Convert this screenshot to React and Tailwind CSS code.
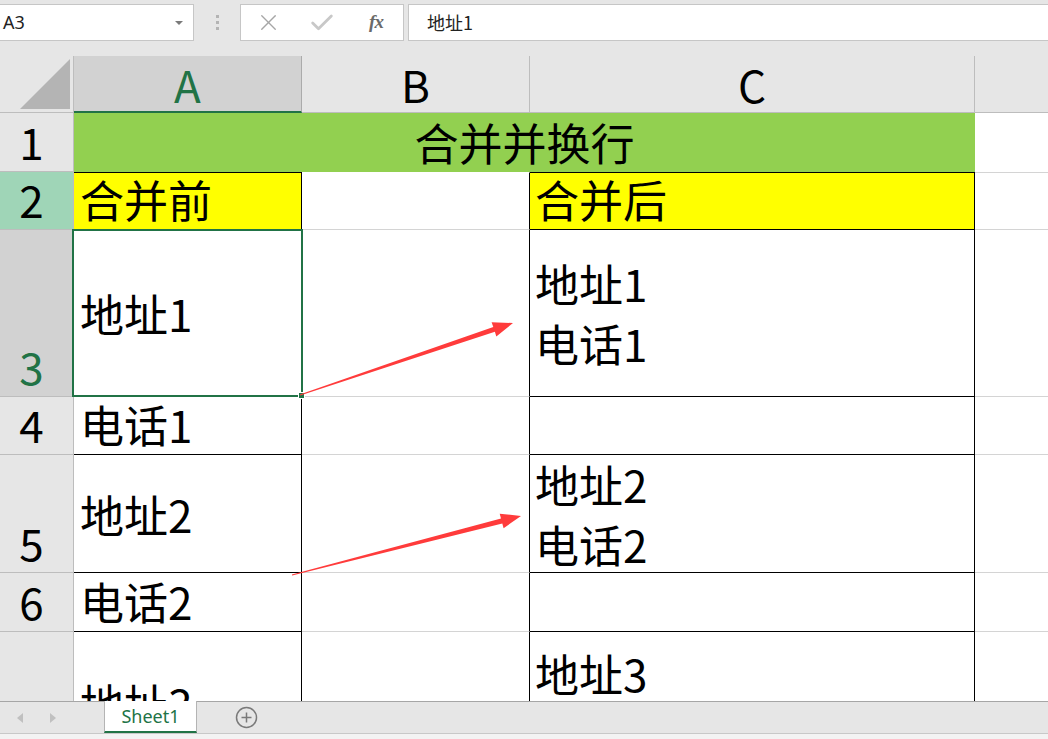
import React from 'react';
import { X, Check } from 'lucide-react';

// cell text in the sheet is large (zoomed-in workbook)
const big = 'text-[44px] leading-[60px] whitespace-nowrap';
// single line that sits on the bottom edge of a short row
const low = 'text-[44px] leading-[52px] whitespace-nowrap pb-[4px]';

function RowHeader({ label, className = '' }) {
  return (
    <div
      className={`w-[74px] shrink-0 flex items-end justify-center pr-[10px] border-r border-b border-[#bdbdbd] ${className}`}
    >
      <span className={low}>{label}</span>
    </div>
  );
}

function Row({ height, children }) {
  return <div className={`flex shrink-0 ${height}`}>{children}</div>;
}

// A column: black borders
function CellA({ className = '', children }) {
  return (
    <div
      className={`w-[228px] shrink-0 flex pl-[6px] border-r border-b border-r-black border-b-black ${className}`}
    >
      {children}
    </div>
  );
}

// B column: grid line below, C's black border to the right
function CellB({ className = '' }) {
  return (
    <div
      className={`w-[228px] shrink-0 border-r border-b border-r-black border-b-[#d4d4d4] ${className}`}
    />
  );
}

function CellC({ className = '', children }) {
  return (
    <div
      className={`w-[445px] shrink-0 flex flex-col pl-[5px] border-r border-b border-r-black border-b-black ${className}`}
    >
      {children}
    </div>
  );
}

function CellD({ className = '' }) {
  return <div className={`flex-1 border-b border-[#d4d4d4] ${className}`} />;
}

function TopBar() {
  return (
    <div className="h-[56px] shrink-0 bg-[#e6e6e6] pt-[4px]">
      <div className="flex h-[37px]">
        {/* name box */}
        <div className="w-[194px] h-full bg-white border border-l-0 border-[#c6c6c6] flex items-center justify-between pl-[3px] pr-[10px]">
          <span className="text-[18px] text-[#222] font-['Noto_Sans',sans-serif]">A3</span>
          <span className="w-0 h-0 border-l-[4px] border-r-[4px] border-t-[4px] border-l-transparent border-r-transparent border-t-[#7a7a7a]" />
        </div>
        {/* grip dots */}
        <div className="w-[46px] h-full flex flex-col items-center justify-center gap-[3px]">
          <span className="w-[3px] h-[3px] bg-[#b4b4b4]" />
          <span className="w-[3px] h-[3px] bg-[#b4b4b4]" />
          <span className="w-[3px] h-[3px] bg-[#b4b4b4]" />
        </div>
        {/* cancel / enter / fx */}
        <div className="w-[164px] h-full bg-white border border-[#c6c6c6] flex items-center">
          <div className="w-[54px] flex justify-center">
            <X size={27} strokeWidth={1.2} className="text-[#a6a6a6]" />
          </div>
          <div className="w-[54px] flex justify-center">
            <Check size={28} strokeWidth={2.4} className="text-[#c8c8c8]" />
          </div>
          <div className="w-[54px] flex justify-center">
            <span className="font-['Liberation_Serif',serif] italic font-bold text-[19px] text-[#6a6a6a] tracking-[-1px]">
              fx
            </span>
          </div>
        </div>
        {/* formula */}
        <div className="ml-[4px] flex-1 h-full bg-white border border-r-0 border-[#c6c6c6] flex items-center pl-[18px]">
          <span className="text-[18px] text-[#222]">地址1</span>
        </div>
      </div>
    </div>
  );
}

function ColumnHeaders() {
  return (
    <div className="flex h-[57px] shrink-0 bg-[#e6e6e6]">
      <div className="w-[74px] shrink-0 border-r border-b border-[#bdbdbd] flex items-end justify-end pr-[3px] pb-[3px]">
        <svg width="50" height="50" viewBox="0 0 50 50">
          <polygon points="50,0 50,50 0,50" fill="#b4b4b4" />
        </svg>
      </div>
      <div className="w-[228px] shrink-0 bg-[#d2d2d2] border-r border-[#ababab] border-b-2 border-b-[#217346] flex items-center justify-center">
        <span className="text-[44px] leading-[52px] text-[#217346]">A</span>
      </div>
      <div className="w-[228px] shrink-0 border-r border-b border-[#bdbdbd] flex items-center justify-center">
        <span className="text-[44px] leading-[52px]">B</span>
      </div>
      <div className="w-[445px] shrink-0 border-r border-b border-[#bdbdbd] flex items-center justify-center">
        <span className="text-[44px] leading-[52px]">C</span>
      </div>
      <div className="flex-1 border-b border-[#bdbdbd]" />
    </div>
  );
}

function Arrows() {
  return (
    <svg
      className="absolute left-0 top-0 pointer-events-none"
      width="1048"
      height="739"
      viewBox="0 0 1048 739"
    >
      <polygon
        fill="#ff3b3b"
        points="300.2,395.5 494.9,331.8 496.3,336.6 513,323 491.6,322.3 493.3,327 299.8,394.5"
      />
      <polygon
        fill="#ff3b3b"
        points="292.1,575.5 502.3,523.4 503.6,528.2 521,516 499.7,513.7 501,518.6 291.9,574.5"
      />
    </svg>
  );
}

function SheetTabs() {
  return (
    <>
      <div className="h-[32px] shrink-0 bg-[#e6e6e6] border-t border-[#a6a6a6] flex items-stretch relative">
        <div className="w-[104px] flex items-center">
          <span className="ml-[17px] w-0 h-0 border-t-[5px] border-b-[5px] border-r-[6px] border-t-transparent border-b-transparent border-r-[#c0c0c0]" />
          <span className="ml-[27px] w-0 h-0 border-t-[5px] border-b-[5px] border-l-[6px] border-t-transparent border-b-transparent border-l-[#c0c0c0]" />
        </div>
        <div className="-mt-px w-[93px] bg-white border-l border-r border-[#b4b4b4] border-b-2 border-b-[#217346] flex items-center justify-center">
          <span className="text-[18px] text-[#217346] font-['Noto_Sans',sans-serif]">Sheet1</span>
        </div>
        <div className="ml-[38px] flex items-center">
          <svg width="23" height="23" viewBox="0 0 23 23">
            <circle cx="11.5" cy="11.5" r="10" fill="none" stroke="#7a7a7a" strokeWidth="1.5" />
            <path d="M11.5 6.5v10M6.5 11.5h10" stroke="#7a7a7a" strokeWidth="1.5" />
          </svg>
        </div>
      </div>
      <div className="h-[6px] shrink-0 bg-[#f3f3f3] border-t border-[#c8c8c8]" />
    </>
  );
}

export default function App() {
  return (
    <div className="w-[1048px] h-[739px] relative overflow-hidden bg-white flex flex-col text-black font-['Noto_Sans_CJK_SC',sans-serif]">
      <TopBar />
      <ColumnHeaders />

      <div className="flex-1 overflow-hidden flex flex-col">
        {/* row 1: merged title */}
        <Row height="h-[59px]">
          <RowHeader label="1" className="bg-[#e6e6e6]" />
          <div className="w-[901px] shrink-0 bg-[#92d050] flex items-end justify-center">
            <span className={low}>合并并换行</span>
          </div>
          <CellD className="border-b-0" />
        </Row>

        {/* row 2: headings */}
        <Row height="h-[58px]">
          <RowHeader label="2" className="bg-[#9fd5b7]" />
          <CellA className="bg-[#ffff00] border-t border-t-black items-end">
            <span className={low}>合并前</span>
          </CellA>
          <CellB className="border-t border-t-transparent" />
          <CellC className="bg-[#ffff00] border-t border-t-black justify-end">
            <span className={low}>合并后</span>
          </CellC>
          <CellD className="border-t border-t-[#d4d4d4]" />
        </Row>

        {/* row 3 */}
        <Row height="h-[167px]">
          <RowHeader label="3" className="bg-[#d2d2d2] text-[#217346]" />
          <CellA className="items-center relative">
            <span className={big}>地址1</span>
            <div className="absolute -left-[2px] -top-px w-[231px] h-[168px] border-2 border-[#217346]">
              <span className="absolute -right-[4px] -bottom-[4px] w-[7px] h-[7px] bg-[#217346] border border-white" />
            </div>
          </CellA>
          <CellB />
          <CellC className="justify-center">
            <span className={big}>地址1</span>
            <span className={big}>电话1</span>
          </CellC>
          <CellD />
        </Row>

        {/* row 4 */}
        <Row height="h-[58px]">
          <RowHeader label="4" className="bg-[#e6e6e6]" />
          <CellA className="items-end">
            <span className={low}>电话1</span>
          </CellA>
          <CellB />
          <CellC />
          <CellD />
        </Row>

        {/* row 5 */}
        <Row height="h-[118px]">
          <RowHeader label="5" className="bg-[#e6e6e6]" />
          <CellA className="items-center">
            <span className={big}>地址2</span>
          </CellA>
          <CellB />
          <CellC className="justify-center overflow-hidden">
            <span className={big}>地址2</span>
            <span className={big}>电话2</span>
          </CellC>
          <CellD />
        </Row>

        {/* row 6 */}
        <Row height="h-[59px]">
          <RowHeader label="6" className="bg-[#e6e6e6]" />
          <CellA className="items-end">
            <span className={low}>电话2</span>
          </CellA>
          <CellB />
          <CellC />
          <CellD />
        </Row>

        {/* row 7, cut off by the tab bar */}
        <Row height="h-[142px]">
          <RowHeader label="7" className="bg-[#e6e6e6]" />
          <CellA className="items-center">
            <span className={big}>地址3</span>
          </CellA>
          <CellB />
          <CellC className="justify-center">
            <span className={big}>地址3</span>
            <span className={big}>电话3</span>
          </CellC>
          <CellD />
        </Row>
      </div>

      <SheetTabs />
      <Arrows />
    </div>
  );
}
